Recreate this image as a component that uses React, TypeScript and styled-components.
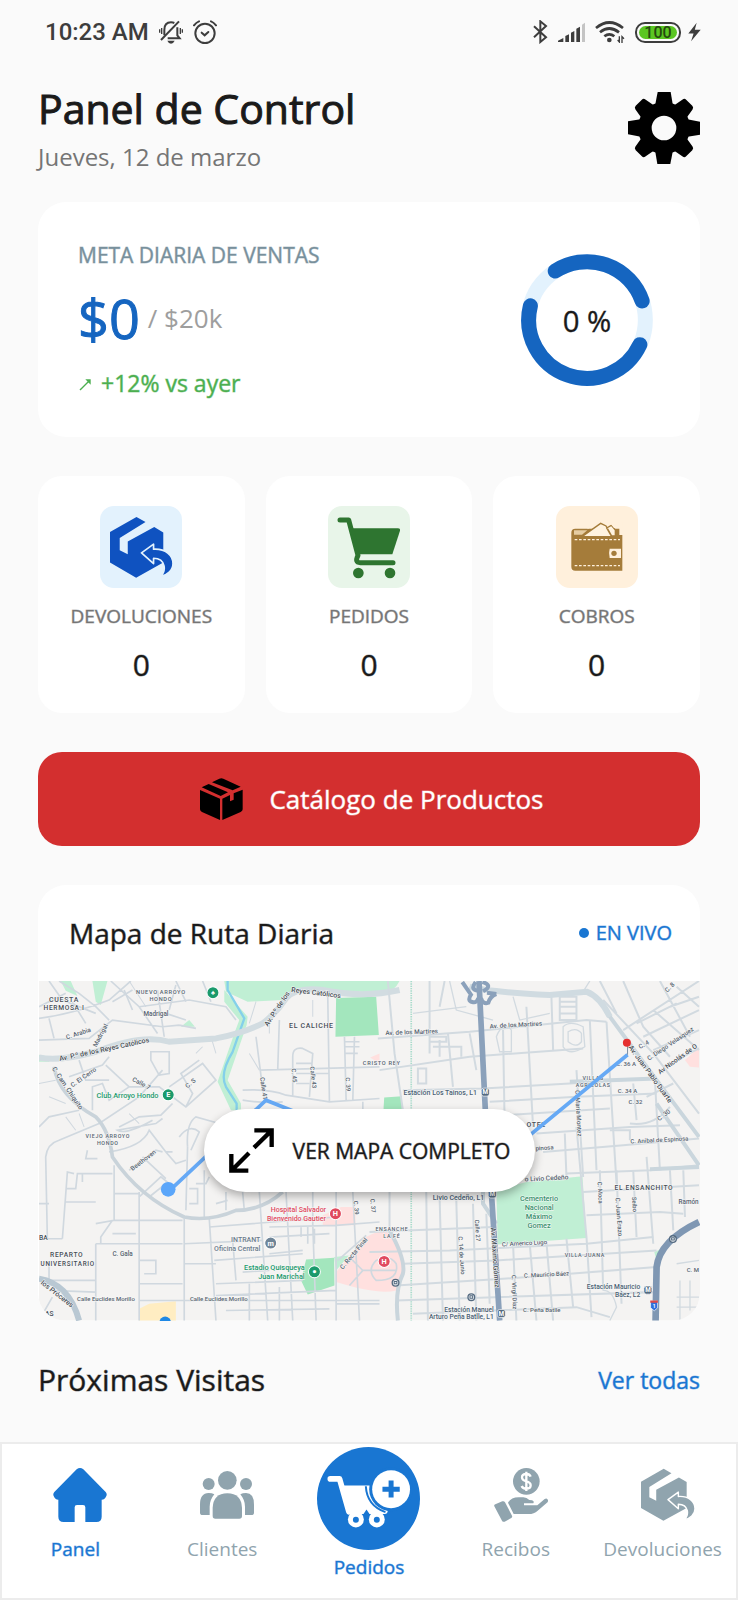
import React from "react";
import styled, { createGlobalStyle, css } from "styled-components";

const GlobalStyle = createGlobalStyle`
  *, *::before, *::after { box-sizing: border-box; }
  body { margin: 0; background: #fafafa; font-family: "Open Sans", "Noto Sans", sans-serif; color: #1a1a1a; }
  h1, h2, p { margin: 0; font-weight: 400; }
  button { font: inherit; border: 0; cursor: pointer; padding: 0; }
  a { text-decoration: none; color: inherit; }
  svg { display: block; flex: none; }
`;

/* a weight between regular and semibold, which the family does not ship */
const medium = css`
  -webkit-text-stroke: 1px color-mix(in srgb, currentColor 45%, transparent);
`;

const strong = css`
  -webkit-text-stroke: 1px currentColor;
`;

const Screen = styled.div`
  min-height: 100vh;
  display: flex;
  flex-direction: column;
`;

const StatusBar = styled.div`
  height: 64px;
  padding: 0 37px 0 45px;
  display: flex;
  align-items: center;
  justify-content: space-between;
  color: #3d3d3d;
`;

const StatusGroup = styled.div<{ $gap: number }>`
  display: flex;
  align-items: center;
  gap: ${(p) => p.$gap}px;
`;

const Clock = styled.span`
  font: 500 24px/32px Roboto, sans-serif;
`;

const Battery = styled.span`
  width: 46px;
  height: 21px;
  border: 2px solid #3d3d3d;
  border-radius: 10px;
  display: flex;
  padding: 2px;
`;

const BatteryLevel = styled.span`
  flex: 1;
  border-radius: 7px;
  background: #5bc622;
  color: #26480f;
  font: 500 16px/14px Roboto, sans-serif;
  text-align: center;
`;

const Main = styled.main`
  flex: 1;
  padding: 18px 38px 42px;
`;

const Header = styled.header`
  display: flex;
  justify-content: space-between;
  align-items: center;
  margin-bottom: 29px;
`;

const PageTitle = styled.h1`
  ${strong}
  font-size: 41px;
  line-height: 52px;
  margin-bottom: 7px;
`;

const DateText = styled.p`
  font-size: 24px;
  line-height: 32px;
  color: #757575;
`;

const IconButton = styled.button`
  background: none;
  color: #000;
`;

const card = css`
  background: #fff;
  border-radius: 28px;
`;

const GoalCard = styled.section`
  ${card}
  padding: 39px 47px 38px 40px;
  display: flex;
  align-items: center;
  justify-content: space-between;
`;

const GoalInfo = styled.div`
  display: flex;
  flex-direction: column;
  gap: 19px;
`;

const GoalLabel = styled.h2`
  ${medium}
  font-size: 21px;
  line-height: 28px;
  color: #78909c;
`;

const GoalAmount = styled.div`
  ${strong}
  display: flex;
  align-items: center;
  gap: 8px;
  height: 60px;
  font-size: 54px;
  line-height: 60px;
  color: #1565c0;
`;

const GoalTarget = styled.span`
  -webkit-text-stroke: 0;
  font-size: 26px;
  line-height: 36px;
  color: #9e9e9e;
`;

const Trend = styled.p`
  ${medium}
  display: flex;
  align-items: center;
  gap: 8px;
  font-size: 23px;
  line-height: 32px;
  color: #4caf50;
`;

const Stats = styled.div`
  display: grid;
  grid-template-columns: repeat(3, 1fr);
  gap: 21px;
  margin: 39px 0;
`;

const StatCard = styled.section`
  ${card}
  border-radius: 24px;
  padding: 30px 8px 28px;
  display: flex;
  flex-direction: column;
  align-items: center;
`;

const StatTile = styled.div<{ $bg: string }>`
  width: 82px;
  height: 82px;
  border-radius: 14px;
  background: ${(p) => p.$bg};
  display: grid;
  place-items: center;
`;

const StatLabel = styled.h2`
  ${medium}
  margin: 14px 0 15px;
  font-size: 19px;
  line-height: 28px;
  color: #757575;
`;

const StatValue = styled.p`
  ${medium}
  font-size: 30px;
  line-height: 40px;
`;

const CatalogButton = styled.button`
  ${medium}
  width: 100%;
  height: 94px;
  padding-left: 6px;
  border-radius: 24px;
  background: #d32f2f;
  color: #fff;
  display: flex;
  align-items: center;
  justify-content: center;
  gap: 26px;
  font-size: 26px;
  line-height: 38px;
`;

const MapCard = styled.section`
  ${card}
  margin: 39px 0;
  overflow: hidden;
`;

const MapHeader = styled.div`
  height: 96px;
  padding: 0 28px 0 31px;
  display: flex;
  align-items: center;
  justify-content: space-between;
`;

const MapTitle = styled.h2`
  ${medium}
  font-size: 28px;
  line-height: 38px;
`;

const Live = styled.span`
  ${medium}
  display: flex;
  align-items: center;
  gap: 7px;
  font-size: 20px;
  line-height: 28px;
  color: #1976d2;
  &::before {
    content: "";
    width: 10px;
    height: 10px;
    border-radius: 50%;
    background: currentColor;
  }
`;

const MapView = styled.div`
  display: grid;
  place-items: center;
  margin-left: 1px;
  > * { grid-area: 1 / 1; }
`;

const MapSvg = styled.svg`
  width: 100%;
  height: auto;
`;

const MapButton = styled.button`
  ${medium}
  z-index: 1;
  height: 83px;
  padding: 0 25px;
  border-radius: 42px;
  background: #fff;
  color: #1a1a1a;
  display: flex;
  align-items: center;
  gap: 19px;
  font-size: 21px;
  line-height: 28px;
  box-shadow: 0 4px 10px rgba(0, 0, 0, 0.3);
`;

const SectionHead = styled.div`
  display: flex;
  align-items: center;
  justify-content: space-between;
`;

const SectionTitle = styled.h2`
  ${medium}
  font-size: 30px;
  line-height: 40px;
`;

const SeeAll = styled.a`
  ${medium}
  font-size: 23px;
  line-height: 32px;
  color: #1976d2;
`;

const Nav = styled.nav`
  height: 158px;
  border: 2px solid #ececec;
  background: #fff;
  display: grid;
  grid-template-columns: repeat(5, 1fr);
`;

const NavItem = styled.a<{ $active?: boolean; $raised?: boolean }>`
  display: flex;
  flex-direction: column;
  align-items: center;
  gap: ${(p) => (p.$raised ? 3 : 13)}px;
  padding-top: ${(p) => (p.$raised ? 3 : 24)}px;
  font-size: 19px;
  line-height: 28px;
  color: ${(p) => (p.$active ? "#1976d2" : "#90a4ae")};
  ${(p) => p.$active && medium}
  svg { margin-left: ${(p) => (p.$raised ? 0 : 10)}px; }
`;

const NavLabel = styled.span`
  white-space: nowrap;
`;

/* ---------- icons ---------- */

const MutedBell = () => (
  <svg width="24" height="24" viewBox="0 0 72 72" fill="none" stroke="#3d3d3d" strokeWidth="6">
    <path d="M6 60 L60 4" />
    <path d="M16 46 V30 Q16 7 36 7 Q42 7 46 9 M55 22 V46 L62 55 H26" />
    <path d="M25 62 H47 Q43 71 36 71 Q29 71 25 62Z" fill="#3d3d3d" stroke="none" />
    <path d="M8 24 V42 M2 28 V38 M64 24 V42 M70 28 V38" strokeWidth="4" />
  </svg>
);

const Alarm = () => (
  <svg width="24" height="24" viewBox="0 0 72 72" fill="none" stroke="#3d3d3d" strokeWidth="6" strokeLinecap="round">
    <circle cx="36" cy="40" r="29" />
    <path d="M26 38 L35 46 L46 36" />
    <path d="M3 16 Q10 7 18 4 M69 16 Q62 7 54 4" />
  </svg>
);

const Bluetooth = () => (
  <svg width="15" height="24" viewBox="0 0 45 72" fill="none" stroke="#3d3d3d" strokeWidth="6">
    <path d="M3 19 L39 52 L22 66 V4 L39 18 L3 52" />
  </svg>
);

const Signal = () => (
  <svg width="27" height="20" viewBox="0 0 81 60" fill="#3d3d3d">
    <path d="M0 60 V56 L16 48 V60Z M22 60 V42 L33 37 V60Z M39 60 V32 L49 27 V60Z M55 60 V20 L66 14 V60Z" />
    <path d="M72 60 V8 L81 2 V60Z" fill="#c4c4c4" />
  </svg>
);

const Wifi = () => (
  <svg width="30" height="22" viewBox="0 0 90 66" fill="none" stroke="#3d3d3d" strokeWidth="8">
    <path d="M3 21 Q43 -12 84 21 M15 34 Q43 11 72 34 M28 46 Q43 34 58 46" />
    <circle cx="43" cy="57" r="7" fill="#3d3d3d" stroke="none" />
    <path d="M73 46 V63 L68 57 M81 66 V47 L87 53" strokeWidth="4" />
  </svg>
);

const Bolt = () => (
  <svg width="13" height="20" viewBox="0 0 42 60" fill="#3d3d3d">
    <path d="M28 0 L1 35 H18 L10 60 L41 23 H22Z" />
  </svg>
);

const Gear = () => (
  <svg width="72" height="72" viewBox="-108 -108 216 216">
    <path
      fillRule="evenodd"
      d="M-78 0 A78 78 0 1 0 78 0 A78 78 0 1 0 -78 0Z M-37 0 A37 37 0 1 1 37 0 A37 37 0 1 1 -37 0Z"
    />
    {[0, 90, 180, 270].map((a) => (
      <path key={a} transform={`rotate(${a})`} d="M-19 -108 H20 L27 -66 H-27Z" />
    ))}
    {[45, 135, 225, 315].map((a) => (
      <path key={a} transform={`rotate(${a})`} d="M-13 -107 H13 Q20 -107 21 -100 L27 -66 H-27 L-21 -100 Q-20 -107 -13 -107Z" />
    ))}
  </svg>
);

const ReturnBox = ({ size, color, gap }: { size: number; color: string; gap: string }) => (
  <svg width={size} height={size} viewBox="244 138 188 188" fill={color}>
    <path d="M323 141 L350 156 L273 204 V240 L297 252 V214 L376 171 L403 187 V277 L322 322 L244 277 V186Z" />
    <path
      d="M338 248 L374 222 V237 C410 235 432 255 432 280 C432 300 415 315 394 319 C412 303 412 265 374 264 V280Z"
      stroke={gap}
      strokeWidth="5"
      strokeLinejoin="round"
    />
  </svg>
);

const Cart = () => (
  <svg width="64" height="63" viewBox="922 140 192 189" fill="#2e7530">
    <path d="M968 177 H1105 Q1112 177 1111 184 L1088 255 H984Z" />
    <path d="M931 152 H957 L985 258 Q974 280 992 280 H1090" fill="none" stroke="#2e7530" strokeWidth="15" strokeLinecap="round" strokeLinejoin="round" />
    <circle cx="986" cy="311" r="16" />
    <circle cx="1081" cy="311" r="16" />
  </svg>
);

const Wallet = () => (
  <svg width="52" height="50" viewBox="631 158 156 150" fill="#a57c3a">
    <path d="M632 190 Q632 178 644 178 H776 V197 H785 V304 H644 Q632 304 632 292Z" />
    <path d="M640 183 H680 L664 196 H640Z" fill="#e6cda3" />
    <path d="M664 202 L720 162 L736 170 L754 202Z M738 176 L752 168 L764 182 V200 H752Z" fill="#fff3e0" stroke="#a57c3a" strokeWidth="4" />
    <path d="M680 180 L718 155 L690 155Z M745 158 H785 V176 L760 176Z" fill="#fff0dc" />
    <path d="M642 211 H778 M642 289 H778" stroke="#fff0dc" strokeWidth="4" strokeDasharray="8 5" />
    <path d="M747 238 H781 V266 H747Q743 252 747 238Z" fill="#fff0dc" />
    <circle cx="760" cy="252" r="8" />
  </svg>
);

const Parcel = () => (
  <svg width="43" height="42" viewBox="0 0 129 126" fill="#000">
    <path d="M0 36 L60 62 V126 L6 102 Q0 99 0 94Z M67 62 L90 51 V70 L101 65 V46 L128 35 V94 Q128 99 122 102 L67 126Z" />
    <path d="M5 28 L26 18 L84 43 L62 54Z M36 13 L58 2 Q64 -1 70 2 L122 26 L98 37Z" />
  </svg>
);

const Expand = () => (
  <svg width="45" height="45" viewBox="0 0 135 135" fill="none" stroke="#000" strokeWidth="13">
    <path d="M76 7 H128 V57 M128 7 L75 59 M7 78 V128 H58 M7 128 L60 75" />
  </svg>
);

const Home = () => (
  <svg width="54" height="54" viewBox="160 384 162 162" fill="#1976d2">
    <path d="M231 388 Q241 380 251 388 L318 456 Q323 462 320 468 Q316 479 306 479 V530 Q306 546 290 546 H257 V502 Q257 495 250 495 H232 Q225 495 225 502 V546 H192 Q176 546 176 530 V479 Q166 479 162 468 Q159 462 164 456Z" />
  </svg>
);

const People = () => (
  <svg width="54" height="54" viewBox="600 384 162 162" fill="#90a4ae">
    <circle cx="682" cy="421" r="28" />
    <circle cx="626" cy="432" r="18" />
    <circle cx="738" cy="432" r="18" />
    <path d="M638 528 V504 Q640 460 682 460 Q724 460 726 504 V528 Q726 536 718 536 H646 Q638 536 638 528Z" />
    <path d="M600 518 V494 Q600 459 626 459 Q636 459 643 463 Q629 480 629 500 V525 H608 Q600 525 600 518Z" />
    <path d="M762 518 V494 Q762 459 738 459 Q728 459 721 463 Q735 480 735 500 V525 H754 Q762 525 762 518Z" />
  </svg>
);

const AddOrder = () => (
  <svg width="103" height="103" viewBox="954 320 310 310" fill="#fff">
    <circle cx="1109" cy="475" r="155" fill="#1976d2" />
    <path d="M994 416 H1022 L1050 515" fill="none" stroke="#fff" strokeWidth="17" strokeLinecap="round" strokeLinejoin="round" />
    <path d="M1030 436 H1150 V490 L1167 512 Q1166 522 1158 522 H1112 L1103 508 L1094 522 H1052Z" />
    <circle cx="1071" cy="538" r="24" />
    <circle cx="1134" cy="538" r="24" />
    <circle cx="1071" cy="539" r="9" fill="#1976d2" />
    <circle cx="1134" cy="539" r="9" fill="#1976d2" />
    <path d="M1101 438 Q1104 496 1160 516" fill="none" stroke="#1976d2" strokeWidth="6" />
    <circle cx="1177" cy="447" r="66" fill="#1976d2" />
    <circle cx="1177" cy="447" r="57" />
    <path d="M1177 421 V472 M1151 447 H1203" stroke="#1976d2" strokeWidth="15" />
  </svg>
);

const HandCoin = () => (
  <svg width="54" height="54" viewBox="378 384 162 162" fill="#90a4ae">
    <circle cx="475" cy="424" r="40" />
    <path d="M488 410 Q485 402 475 402 Q462 402 462 412 Q462 421 475 424 Q488 427 488 436 Q488 446 475 446 Q464 446 461 438 M475 395 V453" fill="none" stroke="#fff" strokeWidth="7" />
    <path d="M382 493 L403 484 Q408 482 411 487 L432 527 Q434 531 430 534 L410 545 Q405 547 402 542 L379 499 Q377 495 382 493Z" />
    <path d="M420 488 Q430 472 452 472 H466 Q476 472 484 480 L492 481 Q500 484 496 490 H468 V496 H508 L530 477 Q538 473 540 481 Q541 485 536 489 L509 512 Q498 522 482 522 H437Z" />
  </svg>
);

const RING_RADIUS = 175;

const ringPoint = (deg: number) => {
  const a = (deg * Math.PI) / 180;
  return `${RING_RADIUS * Math.cos(a)} ${RING_RADIUS * Math.sin(a)}`;
};

const ringArc = (from: number, to: number) =>
  `M${ringPoint(from)} A${RING_RADIUS} ${RING_RADIUS} 0 0 1 ${ringPoint(to)}`;

const GoalRing = () => (
  <svg width="132" height="132" viewBox="-198 -198 396 396" fill="none" strokeWidth="45" role="img" aria-label="0 %">
    <circle r={RING_RADIUS} stroke="#e3f2fd" />
    <path d={`${ringArc(-123, -19)} ${ringArc(25, 194)}`} stroke="#1565c0" strokeLinecap="round" />
    <text x="0" y="36" textAnchor="middle" fontSize="88" fill="#1a1a1a" stroke="#1a1a1a" strokeWidth="1">
      0 %
    </text>
  </svg>
);

/* ---------- route map ---------- */

type LabelProps = { x: number; y: number; t: string; r?: number; s?: number; c?: string; a?: "start" | "middle" | "end"; sp?: boolean };

const Label = ({ x, y, t, r = 0, s = 21, c = "#56636f", a = "start", sp }: LabelProps) => (
  <text
    x={x}
    y={y}
    transform={r ? `rotate(${r} ${x} ${y})` : undefined}
    fontSize={s}
    fill={c}
    textAnchor={a}
    fontWeight={500}
    letterSpacing={sp ? 2 : undefined}
    stroke="#f8f8f8"
    strokeWidth="3"
    paintOrder="stroke"
  >
    {t}
  </text>
);

const Pin = ({ x, y, c, g }: { x: number; y: number; c: string; g: string }) => (
  <g>
    <circle cx={x} cy={y} r="18" fill={c} stroke="#fff" strokeWidth="3" />
    <text x={x} y={y + 8} textAnchor="middle" fontSize="22" fontWeight="700" fill="#fff">{g}</text>
  </g>
);

const Metro = ({ x, y, g = "M" }: { x: number; y: number; g?: string }) => (
  <g>
    <rect x={x - 12} y={y - 12} width="24" height="24" rx="7" fill="#546a80" stroke="#fff" strokeWidth="2" />
    <text x={x} y={y + 7} textAnchor="middle" fontSize="19" fontWeight="700" fill="#fff">{g}</text>
  </g>
);

const Stop = ({ x, y }: { x: number; y: number }) => (
  <g fill="none" stroke="#546a80" strokeWidth="4">
    <circle cx={x} cy={y} r="10" fill="#eef1f3" />
    <path d={`M${x - 4} ${y - 4} H${x + 4} V${y + 3} H${x - 4}Z`} strokeWidth="3" />
  </g>
);

const green = "#1b9a6c";
const red = "#e04a5f";

const RouteMap = () => (
  <MapSvg viewBox="0 0 1980 1017" fontFamily="Roboto, sans-serif" role="img" aria-label="Mapa de ruta">
    <rect width="1980" height="1017" fill="#f4f3f2" />

    {/* west half */}
    <g transform="translate(-30 -33)">
      <g fill="#c0efd4">
        <path d="M585 33 H1110 Q1090 75 1045 68 L900 60 Q790 50 760 90 L655 95 L590 65Z" />
        <path d="M95 33 H125 L145 78 L110 62Z M190 33 H235 L215 105 L200 95Z M455 170 L480 150 L497 170Z M30 255 L75 262 L60 275 H30Z" />
        <path d="M585 60 L655 140 L652 165 L595 330 L635 400 V420 H605 L565 335 L615 190 L630 150 L585 95Z" />
      </g>
      <path d="M920 84 L1040 80 L1048 195 L918 200Z M830 867 L914 862 L915 945 L835 972 L815 930Z" fill="#a3e6bd" />
      <path d="M914 860 L958 855 L920 900Z" fill="#c0efd4" />
      <path d="M920 905 L1010 800 Q1090 750 1118 850 Q1130 920 1100 960 Q1050 975 920 935Z M935 710 H978 V765 H880 V735Z M1022 262 L1050 250 V280Z" fill="#ffe0df" />
      <path d="M360 1000 L440 992 V1050 H330 V1015Z" fill="#ffedc2" />
      <path d="M595 33 V60 L645 145 L610 245 Q570 310 590 350 L622 400 V420" fill="none" stroke="#84d0ea" strokeWidth="7" />

      <g fill="none" stroke="#d0d8df" strokeWidth="5">
        <path d="M30 145 Q140 130 240 90 L305 33 M60 33 L100 90 L200 130 M30 210 L180 205 L250 150 L400 170 L450 165 M245 33 L330 110 L385 190 M330 110 L480 90 L590 110 L620 150 M385 60 L405 200 M500 175 L450 165 M90 33 L150 70 L200 110 L240 150" />
        <path d="M30 110 L110 70 M130 95 L170 160 M60 145 L75 205 M250 95 L310 60 M285 60 L310 120 M440 33 L470 95 M520 33 L545 95 M410 130 L470 150 M420 120 L440 45" />
        <path d="M230 285 L300 350 L390 350 L470 410 L560 330 L520 280 L420 350 M365 245 H420 V310 L390 315 L365 270Z M300 350 L240 390 L220 340 L190 350 L190 420 M120 320 L220 285 L240 260 M150 270 L170 330 L240 330 M470 410 L490 370 L455 310 L510 270" />
        <path d="M270 470 L330 440 L395 435 L430 400 M400 445 L380 460 L265 480 Q290 495 370 450 M240 545 Q340 530 360 480 L410 545 L440 580 L470 570 M300 600 L380 540 L400 545 M410 545 L430 545 M410 625 L340 560 M330 680 L395 620 L420 640 M360 680 L410 640" />
        <path d="M55 805 L50 560 Q55 520 90 510 L210 460 L330 380 L400 300 M30 470 L60 440 L150 420 M60 700 H30 M100 805 L115 605 L135 610 M50 805 H100 M110 655 H140 L145 610 H250 M110 695 H200 M205 565 H170 L175 540 M255 585 V750 L200 760 M255 750 H460 M160 635 V610 M255 670 H330 M200 820 V1050 M200 820 H460 M330 665 V1050 M250 750 L215 800 V820 M250 790 H320 M60 875 V930 H200 M60 960 L200 965 M330 870 H380 V910 H345 M330 940 H460 M330 990 H1050 M30 930 H60 M30 1050 L70 980" />
        <path d="M465 745 V1050 M540 745 L560 1050 M465 820 L700 810 M465 880 H560 M555 870 L820 850 M475 530 Q470 460 500 440 L570 460 M475 530 L470 720 M480 655 H505 V700 H480 M525 600 V740 M500 640 H530 L540 620 M590 665 V720 M640 665 L645 720 M560 700 L595 690 M450 500 Q480 460 510 485 L485 540" />
        <path d="M640 360 Q720 355 770 375 L900 395 L1050 385 M640 390 Q700 400 760 395 M680 200 L705 395 M790 260 Q790 230 820 235 L850 250 L840 380 M790 260 L790 380 M690 300 L1050 290 M895 80 L900 395 M945 200 L950 390 M975 200 L970 390 M945 215 H990 M945 230 H990 M945 250 H985 M800 280 H850 M800 310 H900 M800 340 H840 M750 150 L745 300 M1000 395 V420" />
        <path d="M690 665 L715 1050 M770 665 L790 1050 M850 665 V760 L860 1050 M920 665 V1050 M970 665 L990 1050 M540 770 L920 740 M720 770 L920 765 L1050 755 M720 800 L900 790 M720 850 L820 840 M720 900 L640 905 M560 940 L820 930 M560 975 L920 960 M920 1000 H1050 M590 1020 L900 1015 M610 810 L620 930 M660 940 V1050 M750 950 V1050 M815 770 V800 M835 770 V820 M855 775 V820 M925 870 L1010 795 M960 860 L1000 900 L960 945 M1000 900 H1100 M1040 870 Q1080 850 1100 880 Q1110 930 1040 930 Q1010 900 1040 870" />
        <path d="M545 200 L560 250 M520 230 L500 250 M680 95 L660 160 M850 90 V140 M720 130 V190 M660 250 L690 300 M30 340 L80 330 M60 380 L110 400 M110 440 L140 480 M150 430 L165 470 M330 460 L300 430 M350 110 L300 33" strokeWidth="3" />
      </g>
      <path d="M75 290 Q90 380 200 440 Q240 480 250 560 Q330 680 465 740 Q540 755 620 720 Q700 720 760 665" fill="none" stroke="#c9d3da" strokeWidth="11" />
      <path d="M30 262 Q90 275 200 245 Q340 190 420 215 L560 205 Q640 190 700 160 Q740 130 770 85 Q800 50 880 60 Q1000 85 1110 60" fill="none" stroke="#d2dce1" strokeWidth="18" />
      <path d="M30 925 Q120 940 150 1050" fill="none" stroke="#b9c8d3" strokeWidth="18" />

      <Label x={105} y={95} t="CUESTA" a="middle" sp c="#454d55" />
      <Label x={105} y={119} t="HERMOSA I" a="middle" s={20} sp c="#454d55" />
      <Label x={395} y={73} t="NUEVO ARROYO" a="middle" s={17} sp />
      <Label x={395} y={93} t="HONDO" a="middle" s={17} sp />
      <Label x={343} y={137} t="Madrigal" s={19} />
      <Label x={113} y={208} t="C. Arabia" r={-18} s={19} />
      <Label x={202} y={232} t="Madrigal" r={-62} s={19} />
      <Label x={92} y={273} t="Av. P.º de los Reyes Católicos" r={-12} c="#454d55" />
      <Label x={715} y={170} t="Av. P.º de los" r={-56} c="#454d55" />
      <Label x={785} y={66} t="Reyes Católicos" r={7} c="#454d55" />
      <Label x={846} y={174} t="EL CALICHE" a="middle" sp c="#454d55" />
      <Label x={68} y={296} t="C. Cam. Chiquito" r={56} s={20} />
      <Label x={130} y={352} t="C. El Cerro" r={-35} s={19} />
      <Label x={308} y={332} t="Calle 7" r={28} s={19} />
      <Label x={475} y={355} t="C. S" r={-40} s={19} />
      <Label x={388} y={384} t="Club Arroyo Hondo" a="end" c={green} s={22} />
      <Label x={692} y={322} t="Calle 41" r={82} s={19} />
      <Label x={786} y={296} t="C. 45" r={84} s={18} />
      <Label x={842} y={290} t="Calle 43" r={84} s={18} />
      <Label x={948} y={322} t="C. 39" r={86} s={18} />
      <Label x={1000} y={286} t="CRISTO REY" s={17} sp />
      <Label x={236} y={504} t="VIEJO ARROYO" a="middle" s={16} sp />
      <Label x={236} y={525} t="HONDO" a="middle" s={16} sp />
      <Label x={310} y={602} t="Beethoven" r={-37} s={19} />
      <Label x={30} y={809} t="BA" s={20} c="#454d55" />
      <Label x={113} y={861} t="REPARTO" a="middle" s={20} sp c="#454d55" />
      <Label x={116} y={886} t="UNIVERSITARIO" a="middle" s={19} sp c="#454d55" />
      <Label x={250} y={856} t="C. Gala" s={19} />
      <Label x={34} y={940} t="los Próceres" r={38} c="#454d55" />
      <Label x={144} y={993} t="Calle Euclides Morillo" s={18} />
      <Label x={482} y={992} t="Calle Euclides Morillo" s={18} />
      <Label x={48} y={1036} t="AS" s={20} c="#454d55" />
      <Label x={890} y={726} t="Hospital Salvador" a="end" c={red} s={21} />
      <Label x={890} y={752} t="Bienvenido Gautier" a="end" c={red} s={21} />
      <Label x={693} y={816} t="INTRANT" a="end" c="#6b7b8b" s={21} />
      <Label x={693} y={842} t="Oficina Central" a="end" c="#6b7b8b" s={21} />
      <Label x={826} y={899} t="Estadio Quisqueya" a="end" c={green} s={22} />
      <Label x={826} y={926} t="Juan Marichal" a="end" c={green} s={22} />
      <Label x={940} y={898} t="C. Recta Final" r={-50} s={19} />
      <Label x={972} y={692} t="C. 39" r={84} s={18} />
      <Label x={1022} y={686} t="C. 37" r={84} s={18} />
      <Pin x={551} y={68} c={green} g="♠" />
      <Pin x={417} y={374} c={green} g="E" />
      <Pin x={918} y={730} c={red} g="H" />
      <Pin x={724} y={818} c="#6f8598" g="m" />
      <Pin x={855} y={904} c={green} g="●" />
      <circle cx="408" cy="1055" r="17" fill="#1e88e5" />
    </g>

    {/* east half */}
    <g transform="translate(990 -33)">
      <path d="M44 382 L97 378 V418 H42Z" fill="#a3e6bd" />
      <path d="M380 660 L470 635 L638 618 L650 803 L384 822Z M853 845 L875 835 L860 870Z" fill="#c0efd4" />
      <path d="M945 270 L987 232 V292 L960 290Z" fill="#ffe0df" />
      <path d="M125 33 V1050" stroke="#a9dccb" strokeWidth="5" strokeDasharray="4 3" />
      <g fill="none" stroke="#d2dae0" strokeWidth="6">
        <path d="M25 205 L300 185 L650 150 L710 155 M30 300 L300 260 L640 235 M100 360 L340 355 L600 340 L830 325 M360 395 L620 380 L860 370 M400 435 L720 415 M500 490 L780 470 L930 465 M520 545 L760 525 L987 505 M590 610 L840 600 L987 585 M640 665 L987 645 M650 735 L870 725 L940 730 M0 785 L370 770 M0 845 L240 840 L650 820 L850 800 M100 880 L380 870 L860 840 M80 945 L400 925 L860 890 M80 990 L850 965 M130 1030 L620 1010 L720 1040" />
        <path d="M55 33 L75 250 L100 420 M180 33 V250 M225 33 L210 110 M300 190 L320 300 M235 190 L250 350 M400 180 L405 470 M470 110 L490 470 M545 80 L550 240 M620 300 L640 620 M660 150 L680 600 M710 155 L740 640 M790 340 L800 450 M855 330 L870 600 M585 490 L590 620 M620 470 L650 800 L665 1040 M690 600 L700 960 M740 600 L755 1000 M790 600 L800 800 M830 560 L850 820 M900 600 L910 780 M940 600 L945 740" />
        <path d="M60 665 V780 M170 665 L175 1050 M210 680 L220 1050 M260 690 L270 1050 M310 700 L320 1050 M350 730 L360 1000 M430 820 L440 1050 M480 820 L500 1050 M530 815 L550 1050 M590 805 L610 1010 M145 295 H170 V340 H145Z M190 230 H275 V260 M210 210 V260 M180 200 H230 V215 H180 M570 80 H620 V150 H570Z M570 95 H620 M570 110 H620 M570 130 H620" />
        <path d="M700 90 L850 250 L987 430 M760 33 L820 170 L900 260 M900 110 L987 80 M760 180 L987 33 M850 120 L987 240 M800 160 L920 100 M820 200 L987 120 M850 240 L987 180 M880 290 L987 235 M830 380 L910 340 M780 460 Q850 470 900 410 M720 480 H780 V510 M920 50 L987 110 M690 33 L740 130 M870 33 L960 200" />
        <path d="M920 880 L987 870 M930 930 V1050 M960 930 V1020 M920 980 H987 M920 1010 H987 M700 960 Q730 960 740 1010 L720 1050 M380 200 Q400 150 425 180 V245 H390Z M580 170 Q600 150 640 170 L645 230 Q600 260 580 230Z M595 185 Q620 170 635 190 V215 Q620 235 595 215Z" strokeWidth="4" />
        <path d="M240 33 L260 120 L370 150 M430 80 L450 150 L540 130 M660 33 L640 65 M130 130 L290 110" strokeWidth="4" />
      </g>
      <path d="M340 665 V700 L380 760 M60 780 Q110 870 100 910 Q75 960 85 1050" fill="none" stroke="#c9d5dc" strokeWidth="12" />
      <path d="M300 50 Q350 65 540 75 L650 65 Q690 80 720 140 L830 290 L920 410 L987 500 M860 400 L987 585 M840 597 L987 590 M600 335 L860 325" fill="none" stroke="#cad6dd" strokeWidth="12" />
      <path d="M300 50 Q350 65 540 75 L650 65 Q690 80 720 140" fill="none" stroke="#d0dbe1" strokeWidth="18" />
      <path d="M278 36 L304 74 Q292 92 308 96 Q322 100 326 84 M380 72 L352 68 M334 84 Q340 104 356 98 Q362 78 380 72 M318 36 Q300 60 326 62 M338 36 Q372 46 340 64" fill="none" stroke="#8ba1bb" strokeWidth="12" />
      <path d="M328 33 L347 420 M365 665 L390 1050" fill="none" stroke="#8ba1bb" strokeWidth="17" />
      <path d="M987 755 Q870 810 860 890 L857 1050" fill="none" stroke="#7f97b3" strokeWidth="20" />

      <Label x={48} y={195} t="Av. de los Martires" r={-2} s={19} />
      <Label x={360} y={175} t="Av. de los Martires" r={-3} s={19} />
      <Label x={322} y={374} t="Estación Los Tainos, L1" a="end" c="#4a5f73" s={21} />
      <Label x={470} y={470} t="OTEL" c="#454d55" sp />
      <Label x={498} y={541} t="pinosa" r={-4} s={18} />
      <Label x={465} y={634} t="o Livio Cedeño" r={-3} s={20} />
      <Label x={344} y={690} t="Livio Cedeño, L1" a="end" c="#4a5f73" s={21} />
      <Label x={670} y={330} t="VILLAS" a="middle" s={16} sp />
      <Label x={670} y={350} t="AGRICOLAS" a="middle" s={16} sp />
      <Label x={616} y={360} t="C. Maria Montez" r={87} s={19} />
      <Label x={740} y={288} t="C. 36 A" s={18} />
      <Label x={744} y={369} t="C. 34 A" s={18} />
      <Label x={776} y={402} t="C. 32" s={18} />
      <Label x={868} y={453} t="C. 30" r={-38} s={19} />
      <Label x={810} y={237} t="C. 4" r={-28} s={19} />
      <Label x={892} y={68} t="C. 8" r={-45} s={19} />
      <Label x={837} y={272} t="C. Diego Velasquez" r={-34} s={19} />
      <Label x={870} y={313} t="Av Nicolás de O" r={-36} s={20} c="#454d55" />
      <Label x={775} y={232} t="Av. Juan Pablo Duarte" r={54} c="#454d55" />
      <Label x={782} y={520} t="C. Anibal de Espinosa" r={-3} s={18} />
      <Label x={822} y={658} t="EL ENSANCHITO" a="middle" s={20} sp c="#454d55" />
      <Label x={926} y={702} t="Ramón" s={19} />
      <Label x={683} y={634} t="C. Moca" r={87} s={18} />
      <Label x={737} y={682} t="C. Juan Erazo" r={86} s={19} />
      <Label x={786} y={680} t="Seibo" r={86} s={18} />
      <Label x={508} y={692} t="Cementerio" a="middle" c="#36916c" s={22} />
      <Label x={508} y={719} t="Nacional" a="middle" c="#36916c" s={22} />
      <Label x={508} y={747} t="Máximo" a="middle" c="#36916c" s={22} />
      <Label x={508} y={774} t="Gomez" a="middle" c="#36916c" s={22} />
      <Label x={397} y={828} t="C/ Americo Lugo" r={-3} s={18} />
      <Label x={645} y={861} t="VILLA JUANA" a="middle" s={16} sp />
      <Label x={463} y={922} t="C. Mauricio Báez" r={-3} s={18} />
      <Label x={460} y={1024} t="C. Peña Batlle" s={18} />
      <Label x={67} y={781} t="ENSANCHE" a="middle" s={16} sp />
      <Label x={67} y={802} t="LA FÉ" a="middle" s={16} sp />
      <Label x={315} y={748} t="Calle 27" r={86} s={18} />
      <Label x={266} y={798} t="C. 14 de Junio" r={86} s={18} />
      <Label x={363} y={772} t="Av. Máximo Gómez" r={86} c="#454d55" />
      <Label x={426} y={914} t="C. Virgil Díaz" r={88} s={18} />
      <Label x={811} y={955} t="Estación Mauricio" a="end" c="#4a5f73" s={20} />
      <Label x={811} y={979} t="Báez, L2" a="end" c="#4a5f73" s={20} />
      <Label x={372} y={1025} t="Estación Manuel" a="end" c="#4a5f73" s={20} />
      <Label x={372} y={1045} t="Arturo Peña Batlle, L1" a="end" c="#4a5f73" s={20} />
      <Label x={950} y={905} t="C. M" s={18} />
      <Metro x={347} y={366} />
      <Metro x={368} y={671} />
      <Metro x={395} y={1029} />
      <Metro x={834} y={959} />
      <Stop x={909} y={806} />
      <Stop x={78} y={937} />
      <Stop x={305} y={980} />
      <Pin x={44} y={873} c={red} g="H" />
      <path d="M842 992 H863 V1012 L853 1021 L842 1012Z" fill="#2f6fdd" stroke="#fff" strokeWidth="2" />
      <path d="M841 990 H864 V997 H841Z" fill="#e04a4a" />
      <text x="853" y="1013" textAnchor="middle" fontSize="15" fontWeight="700" fill="#fff">1</text>
    </g>

    {/* travelled route */}
    <path d="M395 624 L680 357 L900 445 L1380 536 L1763 221" fill="none" stroke="#66a9f5" strokeWidth="11" />
    <path d="M1763 221 V195" stroke="#7b8fa6" strokeWidth="3" />
    <circle cx="387" cy="624" r="22" fill="#5ba6fa" />
    <circle cx="1761" cy="185" r="12" fill="#e53030" />
  </MapSvg>
);

/* ---------- screen ---------- */

const stats = [
  { label: "DEVOLUCIONES", value: 0, bg: "#e3f2fd", icon: <ReturnBox size={63} color="#0f52c0" gap="#e3f2fd" /> },
  { label: "PEDIDOS", value: 0, bg: "#e8f5e9", icon: <Cart /> },
  { label: "COBROS", value: 0, bg: "#fff0dc", icon: <Wallet /> },
];

const navItems = [
  { label: "Panel", icon: <Home />, active: true },
  { label: "Clientes", icon: <People /> },
  { label: "Pedidos", icon: <AddOrder />, active: true, raised: true },
  { label: "Recibos", icon: <HandCoin /> },
  { label: "Devoluciones", icon: <ReturnBox size={54} color="#90a4ae" gap="#fff" /> },
];

export default function App() {
  return (
    <Screen>
      <GlobalStyle />
      <StatusBar>
        <StatusGroup $gap={10}>
          <Clock>10:23 AM</Clock>
          <MutedBell />
          <Alarm />
        </StatusGroup>
        <StatusGroup $gap={10}>
          <Bluetooth />
          <Signal />
          <Wifi />
          <StatusGroup $gap={7}>
            <Battery>
              <BatteryLevel>100</BatteryLevel>
            </Battery>
            <Bolt />
          </StatusGroup>
        </StatusGroup>
      </StatusBar>

      <Main>
        <Header>
          <div>
            <PageTitle>Panel de Control</PageTitle>
            <DateText>Jueves, 12 de marzo</DateText>
          </div>
          <IconButton type="button" aria-label="Configuración">
            <Gear />
          </IconButton>
        </Header>

        <GoalCard>
          <GoalInfo>
            <GoalLabel>META DIARIA DE VENTAS</GoalLabel>
            <GoalAmount>
              $0 <GoalTarget>/ $20k</GoalTarget>
            </GoalAmount>
            <Trend>
              <svg width="15" height="15" viewBox="0 0 45 45" fill="none" stroke="#4caf50" strokeWidth="4">
                <path d="M6 42 L34 14" />
                <path d="M22 10 H38 V26Z" fill="#4caf50" stroke="none" />
              </svg>
              +12% vs ayer
            </Trend>
          </GoalInfo>
          <GoalRing />
        </GoalCard>

        <Stats>
          {stats.map((s) => (
            <StatCard key={s.label}>
              <StatTile $bg={s.bg}>{s.icon}</StatTile>
              <StatLabel>{s.label}</StatLabel>
              <StatValue>{s.value}</StatValue>
            </StatCard>
          ))}
        </Stats>

        <CatalogButton type="button">
          <Parcel />
          Catálogo de Productos
        </CatalogButton>

        <MapCard>
          <MapHeader>
            <MapTitle>Mapa de Ruta Diaria</MapTitle>
            <Live>EN VIVO</Live>
          </MapHeader>
          <MapView>
            <RouteMap />
            <MapButton type="button">
              <Expand />
              VER MAPA COMPLETO
            </MapButton>
          </MapView>
        </MapCard>

        <SectionHead>
          <SectionTitle>Próximas Visitas</SectionTitle>
          <SeeAll href="#visitas">Ver todas</SeeAll>
        </SectionHead>
      </Main>

      <Nav>
        {navItems.map((n) => (
          <NavItem key={n.label} href={`#${n.label.toLowerCase()}`} $active={n.active} $raised={n.raised}>
            {n.icon}
            <NavLabel>{n.label}</NavLabel>
          </NavItem>
        ))}
      </Nav>
    </Screen>
  );
}
